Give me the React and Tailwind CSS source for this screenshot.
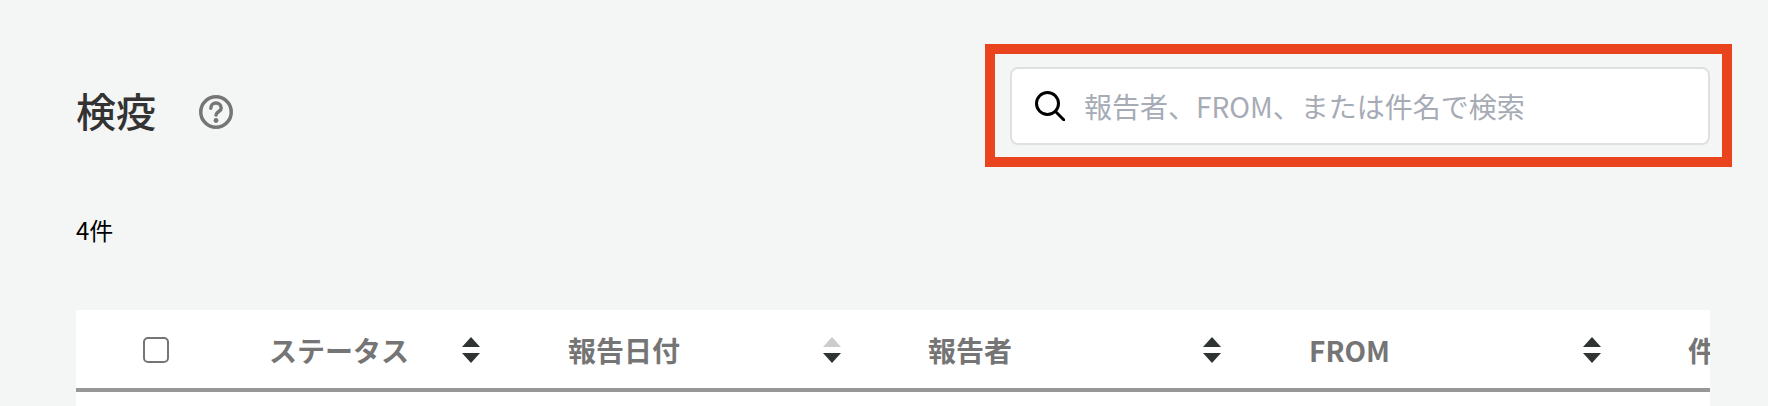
import React from 'react'

const FONT = "font-['Noto_Sans_CJK_JP','Noto_Sans',sans-serif]"

const SortIcon = ({ ascMuted = false }) => (
  <svg width="18" height="26" viewBox="0 0 18 26" className="shrink-0">
    <path d="M9 0 L18 10 H0 Z" fill={ascMuted ? '#cccccc' : '#2f3332'} />
    <path d="M0 16 H18 L9 26 Z" fill="#2f3332" />
  </svg>
)

const HelpIcon = () => (
  <svg width="34" height="34" viewBox="0 0 34 34" fill="none" className="mt-[4px] shrink-0">
    <circle cx="17" cy="17" r="15.25" stroke="#757575" strokeWidth="3.5" />
    <path
      d="M11.8 13.2a5.2 5.2 0 0 1 10.4 0c0 3.2-4.8 3.4-5.2 6.8"
      stroke="#757575"
      strokeWidth="3.5"
      strokeLinecap="round"
    />
    <circle cx="17" cy="25.5" r="2.4" fill="#757575" />
  </svg>
)

const SearchIcon = () => (
  <svg width="30" height="30" viewBox="0 0 30 30" fill="none" className="shrink-0">
    <circle cx="12.5" cy="12.5" r="11" stroke="#000" strokeWidth="3" />
    <path d="M20.5 20.5 L29 29" stroke="#000" strokeWidth="3" strokeLinecap="round" />
  </svg>
)

const columns = [
  { label: 'ステータス', width: 'w-[299px]', textWidth: 'w-[193px]' },
  { label: '報告日付', width: 'w-[360px]', textWidth: 'w-[255px]', ascMuted: true },
  { label: '報告者', width: 'w-[381px]', textWidth: 'w-[275px]' },
  { label: 'FROM', width: 'w-[379px]', textWidth: 'w-[274px]' },
]

export default function App() {
  return (
    <div className={`${FONT} h-[406px] w-[1768px] overflow-hidden bg-[#f4f6f5]`}>
      {/* Title and search */}
      <div className="flex items-start justify-between pl-[76px] pr-[36px] pt-[44px]">
        <div className="flex items-center gap-[43px] pt-[42px]">
          <h1 className="text-[40px] font-medium leading-[48px] text-[#333333]">検疫</h1>
          <HelpIcon />
        </div>
        <div className="h-[123px] w-[747px] border-[10px] border-[#ea441e] pl-[15px] pr-[12px] pt-[13px]">
          <div className="flex h-[78px] items-center gap-[19px] rounded-[8px] border-2 border-[#dfe1e1] bg-white pl-[23px]">
            <SearchIcon />
            <span className="text-[28px] leading-[34px] text-[#a6abb5]">報告者、FROM、または件名で検索</span>
          </div>
        </div>
      </div>

      <p className="ml-[76px] mt-[47px] text-[24px] leading-[32px] text-black">4件</p>

      {/* Table header */}
      <div className="ml-[76px] mt-[64px] w-[1634px] overflow-hidden bg-white">
        <div className="flex h-[82px] w-max items-center border-b-4 border-[#979797] pt-[2px]">
          <div className="flex w-[150px] shrink-0 justify-center pl-[24px] pr-[14px]">
            <span className="block size-[26px] rounded-[5px] border-2 border-[#757575]" />
          </div>
          {columns.map((col) => (
            <div key={col.label} className={`flex ${col.width} shrink-0 items-center pl-[43px]`}>
              <span className={`${col.textWidth} text-[28px] font-bold leading-[36px] text-[#757575]`}>{col.label}</span>
              <SortIcon ascMuted={col.ascMuted} />
            </div>
          ))}
          <div className="w-[300px] shrink-0 pl-[43px] text-[28px] font-bold leading-[36px] text-[#757575]">件名</div>
        </div>
        <div className="h-[20px]" />
      </div>
    </div>
  )
}
